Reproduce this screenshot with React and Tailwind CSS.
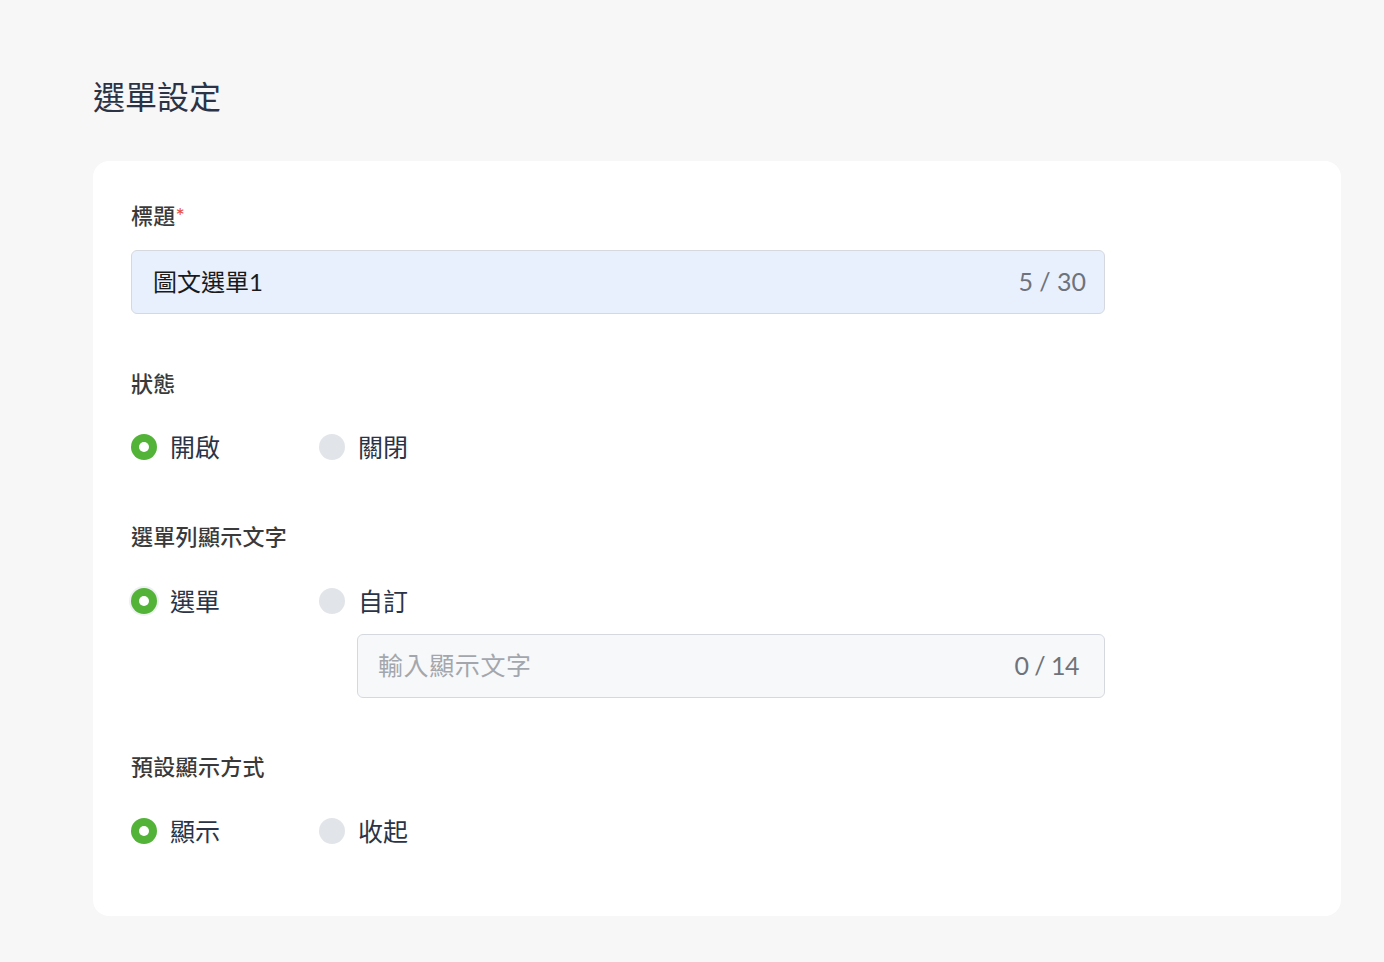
import React, { useState } from 'react';

const font = { fontFamily: 'Lato, "Noto Sans CJK TC", "Noto Sans", sans-serif' };

const Radio = ({ checked, label, onClick, ring }) => (
  <button
    type="button"
    onClick={onClick}
    className="flex items-center w-[188px] h-8 text-left"
  >
    <span
      className={`relative flex items-center justify-center w-[26px] h-[26px] rounded-full shrink-0 ${
        checked ? 'bg-[#52b338]' : 'bg-[#e1e4e9]'
      } ${ring ? 'ring-2 ring-[#eef0f2]' : ''}`}
    >
      {checked && <span className="w-[10px] h-[10px] rounded-full bg-white" />}
    </span>
    <span className="ml-[13px] text-[25px] leading-8 text-[#2b3447]">{label}</span>
  </button>
);

const Label = ({ children, required }) => (
  <div className="text-[22px] leading-7 font-medium text-[#3a3a3a] tracking-[0.3px]">
    {children}
    {required && <span className="text-[#e5533d]">*</span>}
  </div>
);

export default function App() {
  const [status, setStatus] = useState('on');
  const [barText, setBarText] = useState('menu');
  const [display, setDisplay] = useState('show');
  const [title, setTitle] = useState('圖文選單1');
  const [custom, setCustom] = useState('');

  return (
    <div className="min-h-[962px] bg-[#f7f7f7] pl-[93px] pr-[43px] pt-[75px] pb-[46px]" style={font}>
      <h1 className="text-[32px] leading-[44px] text-[#2b3447] font-normal">選單設定</h1>

      <div className="mt-[42px] bg-white rounded-2xl pl-[38px] pr-[38px] pt-[41px] pb-[69px]">
        <Label required>標題</Label>
        <div className="mt-5 w-[974px] h-16 flex items-center justify-between rounded-md border border-[#d5d9df] bg-[#e8f0fe] pl-[21px] pr-[18px]">
          <input
            value={title}
            onChange={(e) => setTitle(e.target.value.slice(0, 30))}
            className="flex-1 bg-transparent outline-none text-[24px] text-[#1a1a1a]"
          />
          <span className="text-[25px] text-[#6e737b]">{title.length} / 30</span>
        </div>

        <div className="mt-14">
          <Label>狀態</Label>
        </div>
        <div className="mt-[33px] flex">
          <Radio checked={status === 'on'} label="開啟" onClick={() => setStatus('on')} />
          <Radio checked={status === 'off'} label="關閉" onClick={() => setStatus('off')} />
        </div>

        <div className="mt-[60px]">
          <Label>選單列顯示文字</Label>
        </div>
        <div className="mt-[34px] flex">
          <Radio ring checked={barText === 'menu'} label="選單" onClick={() => setBarText('menu')} />
          <Radio checked={barText === 'custom'} label="自訂" onClick={() => setBarText('custom')} />
        </div>
        <div className="mt-[17px] ml-[226px] w-[748px] h-16 flex items-center justify-between rounded-md border border-[#d5d9df] bg-[#f7f8fa] pl-5 pr-[25px]">
          <input
            value={custom}
            onChange={(e) => setCustom(e.target.value.slice(0, 14))}
            placeholder="輸入顯示文字"
            className="flex-1 bg-transparent outline-none text-[25px] tracking-[0.6px] text-[#1a1a1a] placeholder:text-[#a3a7ad]"
          />
          <span className="text-[25px] text-[#6e737b] tracking-[-0.5px]">{custom.length} / 14</span>
        </div>

        <div className="mt-[55px]">
          <Label>預設顯示方式</Label>
        </div>
        <div className="mt-[34px] flex">
          <Radio checked={display === 'show'} label="顯示" onClick={() => setDisplay('show')} />
          <Radio checked={display === 'hide'} label="收起" onClick={() => setDisplay('hide')} />
        </div>
      </div>
    </div>
  );
}
